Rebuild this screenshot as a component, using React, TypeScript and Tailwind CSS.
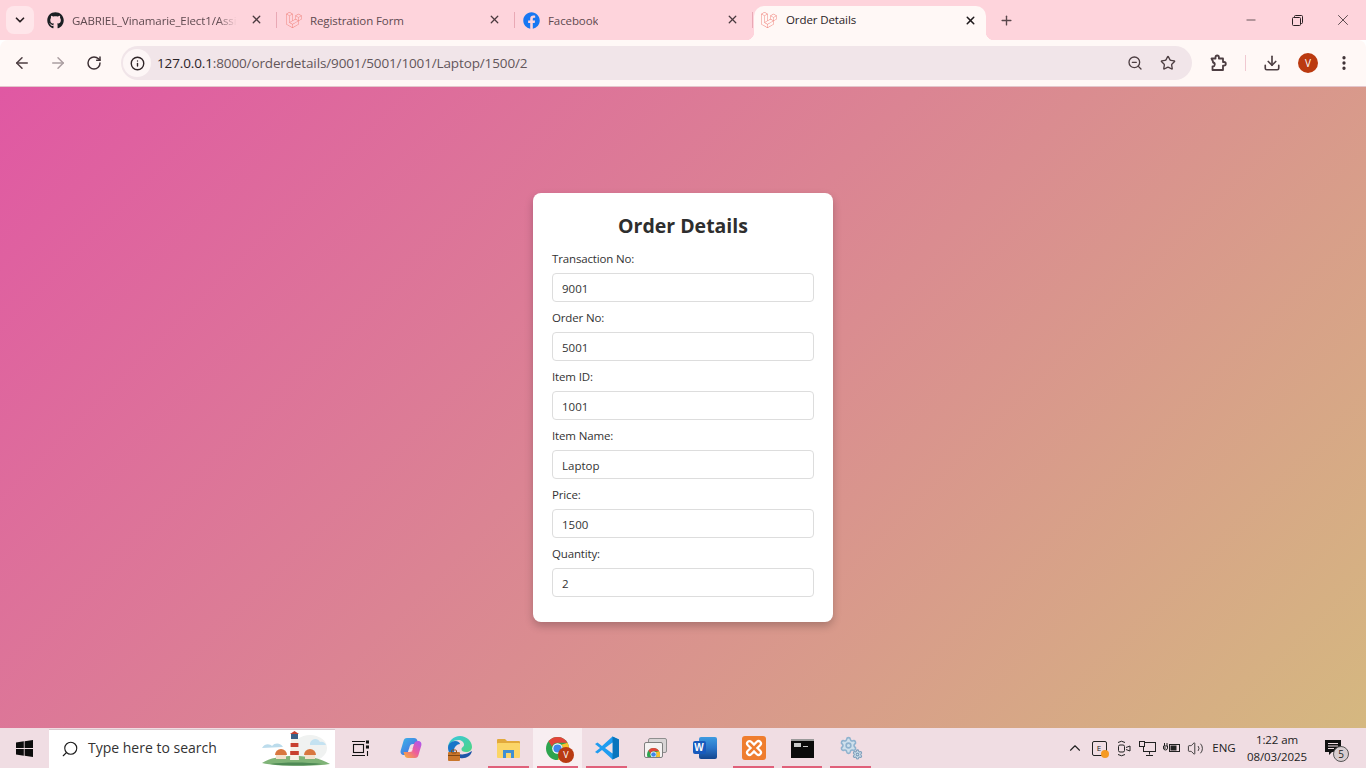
import {
  ArrowLeft,
  ArrowRight,
  ChevronDown,
  ChevronUp,
  Download,
  Info,
  Minus,
  MoreVertical,
  Plus,
  RotateCw,
  Search,
  Settings,
  Star,
  Volume2,
  X,
  ZoomOut,
} from "lucide-react";
import { FaGithub, FaFacebook } from "react-icons/fa";
import { SiLaravel } from "react-icons/si";

const fields = [
  { label: "Transaction No:", value: "9001" },
  { label: "Order No:", value: "5001" },
  { label: "Item ID:", value: "1001" },
  { label: "Item Name:", value: "Laptop" },
  { label: "Price:", value: "1500" },
  { label: "Quantity:", value: "2" },
];

const Tab = ({
  icon,
  title,
  fade,
}: {
  icon: React.ReactNode;
  title: string;
  fade?: boolean;
}) => (
  <div className="relative flex h-[40px] w-[238px] shrink-0 items-center pl-[9px]">
    <div className="flex w-[17px] shrink-0 justify-center">{icon}</div>
    <span
      className={`ml-[8px] overflow-hidden whitespace-nowrap pt-[1px] text-[11.5px] tracking-[-0.1px] text-[#5f4a50] ${
        fade ? "[mask-image:linear-gradient(90deg,#000_88%,transparent)]" : ""
      }`}
    >
      {title}
    </span>
    <X className="absolute left-[212px] top-[13px] h-[13px] w-[13px] text-[#4a3a3f]" strokeWidth={2.4} />
    <div className="absolute right-[-1px] top-[12px] h-[16px] w-px bg-[#e9a9b5]" />
  </div>
);

const TabStrip = () => (
  <div className="flex h-[40px] items-center bg-[#fed4dc]">
    <div className="ml-[6px] flex h-[28px] w-[28px] items-center justify-center rounded-lg bg-[#ffe6ea]">
      <ChevronDown className="h-[14px] w-[14px] text-[#2a2023]" strokeWidth={3} />
    </div>
    <div className="ml-[4px] flex">
      <Tab icon={<FaGithub className="h-[17px] w-[17px] text-[#1b1f23]" />} title="GABRIEL_Vinamarie_Elect1/Assi" fade />
      <Tab icon={<SiLaravel className="h-[16px] w-[16px] text-[#f0837c]" />} title="Registration Form" />
      <Tab icon={<FaFacebook className="h-[17px] w-[17px] text-[#1877f2]" />} title="Facebook" />
    </div>
    <div className="relative ml-[2px] mt-[6px] flex h-[34px] w-[232px] items-center rounded-t-[10px] bg-[#fff8f6] pb-[6px] pl-[7px] pr-[9px]">
      <div className="absolute bottom-0 left-[-8px] h-[8px] w-[8px] bg-[radial-gradient(circle_at_0_0,#fed4dc_8px,#fff8f6_8.5px)]" />
      <div className="absolute bottom-0 right-[-8px] h-[8px] w-[8px] bg-[radial-gradient(circle_at_100%_0,#fed4dc_8px,#fff8f6_8.5px)]" />
      <SiLaravel className="h-[16px] w-[16px] shrink-0 text-[#f0837c]" />
      <span className="ml-[9px] flex-1 text-[11.5px] tracking-[-0.1px] text-[#2a2326]">Order Details</span>
      <X className="h-[13px] w-[13px] text-[#1f1a1c]" strokeWidth={2.8} />
    </div>
    <Plus className="ml-[13px] h-[15px] w-[15px] text-[#5a474c]" strokeWidth={2.2} />
    <div className="ml-auto flex items-center text-[#2a2023]">
      <div className="flex h-[40px] w-[46px] items-center justify-center">
        <Minus className="h-[14px] w-[14px]" strokeWidth={1.2} />
      </div>
      <div className="flex h-[40px] w-[46px] items-center justify-center">
        <svg width="11" height="11" viewBox="0 0 11 11" fill="none" stroke="currentColor" strokeWidth="1">
          <rect x="0.5" y="2.5" width="8" height="8" rx="1" />
          <path d="M2.5 2.5V1.5a1 1 0 0 1 1-1h6a1 1 0 0 1 1 1v6a1 1 0 0 1-1 1H8.5" />
        </svg>
      </div>
      <div className="flex h-[40px] w-[46px] items-center justify-center">
        <X className="h-[18px] w-[18px]" strokeWidth={1} />
      </div>
    </div>
  </div>
);

const ExtensionIcon = () => (
  <svg className="ml-[17px]" width="18" height="18" viewBox="0 0 18 18" fill="none" stroke="currentColor" strokeWidth="1.8" strokeLinejoin="round">
    <path d="M2.500 4.500H6.500V3.200a1.700 1.700 0 0 1 3.400 0V4.500H14V8h1a1.800 1.800 0 0 1 0 3.600h-1V16H3.500V12.500a2 2 0 0 0 .5-4V7.500Z" />
  </svg>
);

const Toolbar = () => (
  <div className="relative flex h-[47px] items-center rounded-t-[8px] border-b border-[#e3c6cc] bg-[#fff8f6]">
    <div className="flex w-[121px] shrink-0 items-center pl-[13px] text-[#4d3e42]">
      <ArrowLeft className="h-[18px] w-[18px]" strokeWidth={2} />
      <ArrowRight className="ml-[18px] h-[18px] w-[18px] text-[#ab9ea1]" strokeWidth={2} />
      <RotateCw className="ml-[19px] h-[16px] w-[16px] text-[#3d3034]" strokeWidth={2.2} />
    </div>
    <div className="flex h-[34px] w-[1071px] shrink-0 items-center rounded-full bg-[#f1e5e9]">
      <div className="ml-[2px] flex h-[28px] w-[28px] items-center justify-center rounded-full bg-[#fdf6f6]">
        <Info className="h-[15px] w-[15px] text-[#2f2528]" strokeWidth={2.2} />
      </div>
      <span className="ml-[6px] flex-1 text-[13.5px] tracking-[-0.13px] text-[#63565a]">
        <span className="text-[#2a2326]">127.0.0.1</span>:8000/orderdetails/9001/5001/1001/Laptop/1500/2
      </span>
      <ZoomOut className="mr-[17px] h-[16px] w-[16px] text-[#4d3e42]" strokeWidth={2} />
      <Star className="mr-[16px] h-[16px] w-[16px] text-[#4d3e42]" strokeWidth={2} />
    </div>
    <div className="flex flex-1 items-center text-[#4d3e42]">
      <ExtensionIcon />
      <div className="ml-[18px] h-[16px] w-px bg-[#f0c9d1]" />
      <Download className="ml-[17px] h-[18px] w-[18px]" strokeWidth={2.2} />
      <div className="ml-[17px] flex h-[20px] w-[20px] items-center justify-center rounded-full bg-[#bb3a10] text-[10px] text-white">
        V
      </div>
      <MoreVertical className="ml-[17px] h-[18px] w-[18px] text-[#3d3034]" strokeWidth={2.4} />
    </div>
  </div>
);

const WindowsLogo = () => (
  <svg width="17" height="17" viewBox="0 0 17 17" fill="#0c0c0c">
    <path d="M0 2.400 7.800 1.300V8H0ZM8.600 1.200 17 0V8H8.600ZM0 9H7.800V15.700L0 14.600ZM8.600 9H17V17L8.600 15.800Z" />
  </svg>
);

const SearchArt = () => (
  <svg width="72" height="36" viewBox="0 0 72 36">
    <ellipse cx="50" cy="17" rx="17" ry="13" fill="#f0f2f1" />
    <path d="M2 17c3-5 8-4 10-2 3-4 9-3 11 1l-21 1Z" fill="#bcdcec" />
    <path d="M50 12c2-5 8-5 10-1 3-1 5 1 6 3H50Z" fill="#c4e2f1" />
    <path d="M2 32c8-5 18-7 32-7s26 2 36 8c-10 2-52 3-68-1Z" fill="#7fb377" />
    <path d="M10 33c14-2 36-2 52 0-14 2-38 2-52 0Z" fill="#4f8a56" />
    <path d="M15 24a6 6 0 0 1 12 0Z" fill="#d9773f" />
    <rect x="16" y="24" width="10" height="4" fill="#f3e1cc" />
    <path d="M44 24a6 6 0 0 1 12 0Z" fill="#d9773f" />
    <rect x="45" y="24" width="10" height="4" fill="#f3e1cc" />
    <path d="M31 8h7l1 21h-9Z" fill="#f5efe6" />
    <rect x="30.600" y="12" width="7.800" height="4" fill="#c8402f" />
    <rect x="30.200" y="20" width="8.600" height="4" fill="#c8402f" />
    <rect x="31" y="3" width="7" height="5" fill="#3b5f86" />
    <path d="M30 3l4.500-3 4.500 3Z" fill="#c8402f" />
  </svg>
);

const Copilot = () => (
  <svg width="22" height="22" viewBox="0 0 22 22">
    <defs>
      <linearGradient id="cpA" x1="0" y1="0" x2="1" y2="1">
        <stop offset="0" stopColor="#3bb6e8" />
        <stop offset="1" stopColor="#4a5fe0" />
      </linearGradient>
      <linearGradient id="cpB" x1="0" y1="1" x2="1" y2="0">
        <stop offset="0" stopColor="#f7b733" />
        <stop offset="0.5" stopColor="#ee5d9a" />
        <stop offset="1" stopColor="#a855f7" />
      </linearGradient>
    </defs>
    <path d="M7 1h7c2 0 3 1 3.500 3l1 3H13c-2 0-3 1-3.500 3L8 15c-.5 2-2 3-4 3-2.500 0-4-2-3.300-4.500L3.500 4C4 2 5 1 7 1Z" fill="url(#cpA)" />
    <path d="M15 21H8c-2 0-3-1-3.500-3l-1-3H9c2 0 3-1 3.500-3L14 7c.5-2 2-3 4-3 2.500 0 4 2 3.300 4.500L18.500 18c-.5 2-1.500 3-3.500 3Z" fill="url(#cpB)" />
    <path d="M9 12h4l-1 3H8Z" fill="#fff" opacity="0.35" />
  </svg>
);

const Edge = () => (
  <svg width="26" height="26" viewBox="0 0 26 26">
    <defs>
      <linearGradient id="edA" x1="0" y1="0" x2="1" y2="1">
        <stop offset="0" stopColor="#38c6e0" />
        <stop offset="1" stopColor="#4fd67f" />
      </linearGradient>
    </defs>
    <path d="M1 13C1 6 6.500 1 13 1s12 5 12 11c0 3-2.500 5-6 5-3 0-4.500-1-4.500-2.500 0-3 2.500-2 2.500-5 0-2.500-3-4.500-5.500-4.500C6 5 2.500 8 1 13Z" fill="url(#edA)" />
    <path d="M1 13c0-4 3.500-7 7-7 3 0 5 1.500 5 3-3 0-6 3-6 6.500 0 3 2 6 6 7.500-6 .5-12-4-12-10Z" fill="#1976c9" />
    <path d="M13 23c-3-1-5-4-4-7 1 3 5 4 9 3 3-.5 5-2 7-3-1 5-6 8-12 7Z" fill="#1e56a8" />
    <rect x="1" y="17" width="12" height="9" rx="1" fill="#c9762b" />
    <rect x="4.500" y="15" width="5" height="3" rx="1" fill="none" stroke="#8d4d17" />
    <rect x="1" y="20" width="12" height="1" fill="#7d4513" />
  </svg>
);

const Explorer = () => (
  <svg width="23" height="21" viewBox="0 0 23 21">
    <path d="M0 2a1 1 0 0 1 1-1h7l2 2h12a1 1 0 0 1 1 1v3H0Z" fill="#e2a93b" />
    <rect y="5" width="23" height="15" rx="1" fill="#fbd567" />
    <rect x="6" y="12" width="11" height="8" fill="#3f8fd2" />
    <rect x="9" y="15" width="5" height="5" fill="#fbd567" />
  </svg>
);

const Chrome = ({ small }: { small?: boolean }) => (
  <svg width={small ? 13 : 23} height={small ? 13 : 23} viewBox="0 0 24 24">
    <circle cx="12" cy="12" r="12" fill="#2ea44f" />
    <path d="M12 0a12 12 0 0 1 10.400 6H12a6 6 0 0 0-5.700 4.200L2.600 4.500A12 12 0 0 1 12 0Z" fill="#e3443a" />
    <path d="M22.400 6A12 12 0 0 1 12 24l5.200-9A6 6 0 0 0 16 8l6.400-2Z" fill="#fbc02d" />
    <circle cx="12" cy="12" r="5.500" fill="#fff" />
    <circle cx="12" cy="12" r="4.300" fill="#3f86ec" />
  </svg>
);

const VSCode = () => (
  <svg width="24" height="24" viewBox="0 0 24 24">
    <path d="M17.500 0.500 24 3.500v17l-6.500 3L7 14l-4.500 3.500L0 16l5-4L0 8l2.500-1.500L7 10Z" fill="#1f9cf0" />
    <path d="M17.500 0.500 24 3.500v17l-6.500 3Z" fill="#0a75bd" />
    <path d="M17.500 6.500v11L10 12Z" fill="#f2dfe4" />
  </svg>
);

const ChromeApps = () => (
  <div className="relative h-[20px] w-[23px]">
    <div className="absolute right-0 top-0 h-[15px] w-[19px] rounded-[2px] border border-[#8f8f8f] bg-[#d9d5d6]" />
    <div className="absolute bottom-0 left-0 flex h-[16px] w-[19px] items-end justify-center overflow-hidden rounded-[2px] border border-[#7f7f7f] bg-[#f5f2f2]">
      <div className="-mb-[4px]">
        <Chrome small />
      </div>
    </div>
  </div>
);

const Word = () => (
  <div className="relative h-[22px] w-[24px]">
    <div className="absolute right-0 top-0 h-[22px] w-[18px] rounded-[2px] bg-[linear-gradient(180deg,#3e9be0_0%,#2a74c9_50%,#14468f_100%)]" />
    <div className="absolute left-0 top-[4px] flex h-[13px] w-[13px] items-center justify-center rounded-[2px] bg-[#185abd] text-[10px] font-bold text-white [font-family:'Liberation_Sans',sans-serif]">
      W
    </div>
  </div>
);

const Xampp = () => (
  <div className="flex h-[24px] w-[24px] items-center justify-center rounded-[3px] bg-[#ef7d2e]">
    <svg width="18" height="18" viewBox="0 0 16 16" fill="none" stroke="#fff" strokeWidth="2">
      <path d="M5 8 2.500 5.500a2 2 0 0 1 3-3L8 5l2.500-2.500a2 2 0 0 1 3 3L11 8l2.500 2.500a2 2 0 0 1-3 3L8 11l-2.500 2.500a2 2 0 0 1-3-3Z" />
    </svg>
  </div>
);

const Cmd = () => (
  <div className="flex h-[19px] w-[23px] flex-col border-t-2 border-[#9a9a9a] bg-[#0b0b0b] pl-[3px] pt-[2px]">
    <div className="flex items-end gap-[2px]">
      <div className="h-[4px] w-[7px] bg-[#c9c9c9]" />
      <div className="h-px w-[5px] bg-[#c9c9c9]" />
    </div>
  </div>
);

const Gear = () => (
  <div className="relative h-[24px] w-[24px]">
    <Settings className="h-[19px] w-[19px] fill-[#cfe0ec] text-[#8fb2ce]" strokeWidth={2} />
    <Settings className="absolute bottom-0 right-0 h-[11px] w-[11px] fill-[#cfe0ec] text-[#7f9fbb]" strokeWidth={2.4} />
  </div>
);

const taskApps = [
  { node: <Edge />, w: 49 },
  { node: <Explorer />, w: 49, open: true },
  { node: null, w: 49, open: true, chrome: true },
  { node: <VSCode />, w: 49, open: true },
  { node: <ChromeApps />, w: 49 },
  { node: <Word />, w: 49 },
  { node: <Xampp />, w: 49, open: true },
  { node: <Cmd />, w: 48, open: true },
  { node: <Gear />, w: 49, open: true },
];

const Taskbar = () => (
  <div className="flex h-[40px] items-center bg-[#f0dde3] text-[#1c1c1c]">
    <div className="flex h-[40px] w-[49px] shrink-0 items-center justify-center">
      <WindowsLogo />
    </div>
    <div className="flex h-[39px] w-[286px] shrink-0 items-center self-end overflow-hidden border-t border-[#d9c7cc] bg-white pl-[12px]">
      <Search className="h-[18px] w-[18px] -scale-x-100" strokeWidth={1.5} />
      <span className="ml-[9px] -mt-[3px] text-[14px] text-[#333]">Type here to search</span>
      <div className="ml-auto mr-[3px]">
        <SearchArt />
      </div>
    </div>
    <div className="flex w-[50px] shrink-0 justify-center">
      <svg width="17" height="17" viewBox="0 0 17 17" fill="none" stroke="#111" strokeWidth="1.100">
        <rect x="1.500" y="4.500" width="10" height="8" />
        <path d="M0 1.500h13M0 15.500h13" />
        <rect x="14.500" y="1" width="2" height="2" fill="#111" />
        <rect x="14.500" y="6" width="2" height="2" fill="#111" />
        <path d="M15.500 11v5" />
      </svg>
    </div>
    <div className="ml-[1px] flex w-[49px] shrink-0 justify-center">
      <Copilot />
    </div>
    <div className="flex">
      {taskApps.map((app, i) => (
        <div
          key={i}
          className={`relative flex h-[40px] items-center justify-center ${app.chrome ? "bg-[#f8eef1]" : ""}`}
          style={{ width: app.w }}
        >
          {app.chrome ? (
            <div className="relative">
              <Chrome />
              <div className="absolute -bottom-[3px] -right-[5px] flex h-[16px] w-[16px] items-center justify-center rounded-full bg-[#b93a12] text-[9px] text-white">
                V
              </div>
            </div>
          ) : (
            app.node
          )}
          {app.open && <div className="absolute bottom-0 left-[4px] right-[4px] h-[2px] bg-[#e0607a]" />}
        </div>
      ))}
    </div>
    <div className="ml-auto flex items-center text-[#222]">
      <div className="flex w-[24px] justify-center">
        <ChevronUp className="h-[18px] w-[18px]" strokeWidth={1.5} />
      </div>
      <div className="flex w-[24px] justify-center">
        <div className="relative flex h-[15px] w-[15px] items-center justify-center rounded-[2px] border border-[#222] text-[8px]">
          E
          <div className="absolute -bottom-[3px] -right-[3px] h-[8px] w-[8px] rounded-full bg-[#f59a23]" />
        </div>
      </div>
      <div className="flex w-[24px] justify-center">
        <svg width="17" height="17" viewBox="0 0 17 17" fill="none" stroke="#222">
          <rect x="3.500" y="5" width="6" height="7" rx="1.500" />
          <path d="M11 7.500l4-1.500v5l-4-1.500M3 2.500a6 6 0 0 1 7 0M3 14.500a6 6 0 0 0 7 0" />
        </svg>
      </div>
      <div className="flex w-[24px] justify-center">
        <svg width="17" height="17" viewBox="0 0 17 17" fill="none" stroke="#222">
          <rect x="4.500" y="2.500" width="12" height="9" />
          <rect x="0.500" y="1.500" width="5" height="5" fill="#f0dde3" />
          <path d="M10.500 11.500v3M7 15.500h7" />
        </svg>
      </div>
      <div className="flex w-[24px] justify-center">
        <svg width="17" height="17" viewBox="0 0 17 17" fill="none" stroke="#222">
          <rect x="6.500" y="4.500" width="10" height="7" />
          <rect x="7.500" y="5.500" width="6" height="5" fill="#222" stroke="none" />
          <path d="M0 8h3M1.500 3v3M4 3v3M0.500 6h4v2a2 2 0 0 1-4 0Z" />
        </svg>
      </div>
      <div className="flex w-[24px] justify-center">
        <Volume2 className="h-[17px] w-[17px]" strokeWidth={1.2} />
      </div>
      <span className="w-[34px] text-center text-[11.5px]">ENG</span>
      <div className="flex w-[72px] flex-col items-center text-[11.5px] leading-[17px] tracking-[-0.1px]">
        <span>1:22 am</span>
        <span>08/03/2025</span>
      </div>
      <div className="relative ml-[12px] mr-[25px] h-[16px] w-[16px]">
        <svg width="16" height="16" viewBox="0 0 16 16">
          <path d="M0 0h16v12H7l-3 3v-3H0Z" fill="#111" />
          <path d="M3 3.500h10M3 6h10M3 8.500h6" stroke="#f0dde3" />
        </svg>
        <div className="absolute -bottom-[6px] -right-[8px] flex h-[16px] w-[16px] items-center justify-center rounded-full border border-[#555] bg-[#d8cdd0] text-[10px]">
          5
        </div>
      </div>
    </div>
  </div>
);

const App = () => {
  return (
    <div className="flex h-[768px] w-[1366px] flex-col overflow-hidden [font-family:'Open_Sans','Noto_Sans',sans-serif]">
      <TabStrip />
      <Toolbar />
      <div className="flex flex-1 items-center justify-center bg-[linear-gradient(135deg,#e058a3,#d5b880)]">
        <div className="h-[429px] w-[300px] rounded-[8px] bg-white px-[19px] pt-[19px] shadow-[0_4px_8px_rgba(0,0,0,0.22)]">
          <h1 className="mb-[12px] text-center text-[19.5px] leading-[27px] font-bold text-[#2e2e2e]">Order Details</h1>
          {fields.map((f) => (
            <div key={f.label} className="mb-[8px]">
              <label className="block text-[11.5px] leading-[15px] tracking-[-0.15px] text-[#333]">{f.label}</label>
              <input
                readOnly
                value={f.value}
                className="mt-[7px] block h-[29px] w-[262px] rounded-[4px] border border-[#ddd] bg-white px-[9px] pt-[1px] text-[11.5px] text-[#333] outline-none"
              />
            </div>
          ))}
        </div>
      </div>
      <Taskbar />
    </div>
  );
};

export default App;
